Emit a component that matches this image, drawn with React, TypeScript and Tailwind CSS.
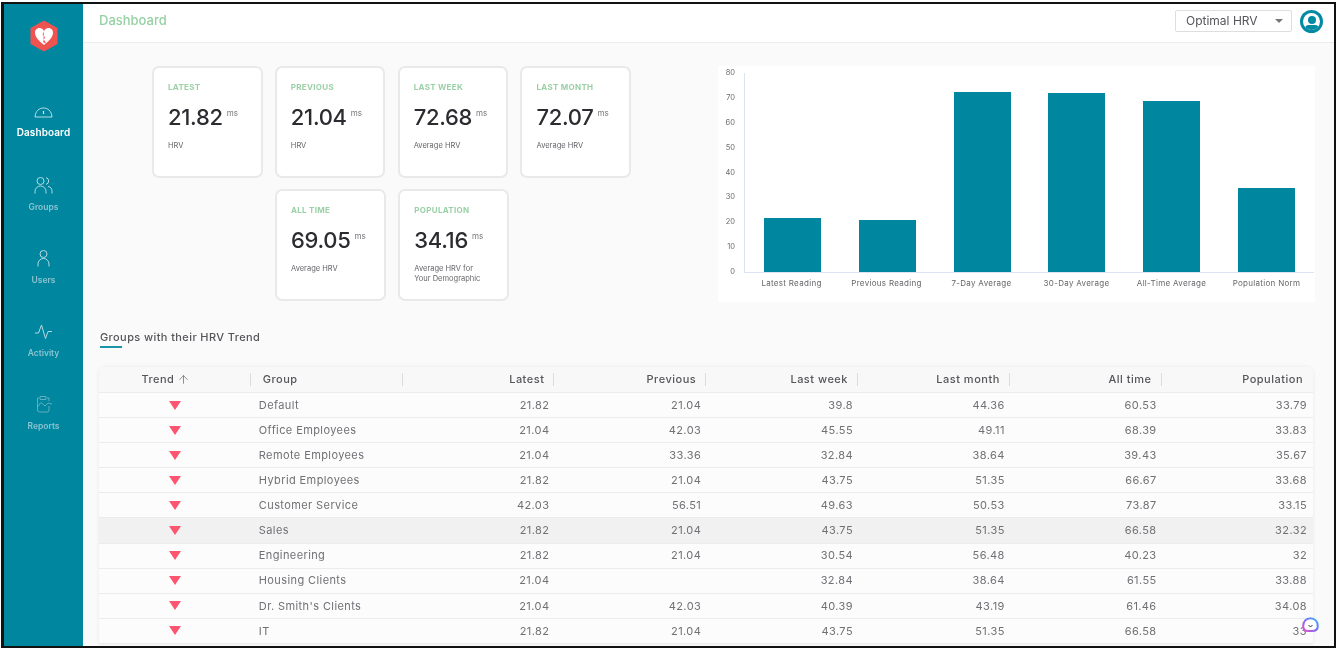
import { ArrowUp } from "lucide-react";

const font = { fontFamily: "Inter, 'Liberation Sans', sans-serif" };

const cardsTop = [
  { t: "LATEST", v: "21.82", s: ["HRV"] },
  { t: "PREVIOUS", v: "21.04", s: ["HRV"] },
  { t: "LAST WEEK", v: "72.68", s: ["Average HRV"] },
  { t: "LAST MONTH", v: "72.07", s: ["Average HRV"] },
];
const cardsBottom = [
  { t: "ALL TIME", v: "69.05", s: ["Average HRV"] },
  { t: "POPULATION", v: "34.16", s: ["Average HRV for", "Your Demographic"] },
];

const rows = [
  ["Default", "21.82", "21.04", "39.8", "44.36", "60.53", "33.79"],
  ["Office Employees", "21.04", "42.03", "45.55", "49.11", "68.39", "33.83"],
  ["Remote Employees", "21.04", "33.36", "32.84", "38.64", "39.43", "35.67"],
  ["Hybrid Employees", "21.82", "21.04", "43.75", "51.35", "66.67", "33.68"],
  ["Customer Service", "42.03", "56.51", "49.63", "50.53", "73.87", "33.15"],
  ["Sales", "21.82", "21.04", "43.75", "51.35", "66.58", "32.32"],
  ["Engineering", "21.82", "21.04", "30.54", "56.48", "40.23", "32"],
  ["Housing Clients", "21.04", "", "32.84", "38.64", "61.55", "33.88"],
  ["Dr. Smith's Clients", "21.04", "42.03", "40.39", "43.19", "61.46", "34.08"],
  ["IT", "21.82", "21.04", "43.75", "51.35", "66.58", "33"],
];

const bars = [
  { l: "Latest Reading", v: 21.82 },
  { l: "Previous Reading", v: 21.04 },
  { l: "7-Day Average", v: 72.68 },
  { l: "30-Day Average", v: 72.07 },
  { l: "All-Time Average", v: 69.05 },
  { l: "Population Norm", v: 34 },
];

function Card({ t, v, s }: { t: string; v: string; s: string[] }) {
  return (
    <div className="w-[111px] h-[112px] bg-white rounded-[7px] border-2 border-[#e9e9e9] pl-[14px] pt-[14px]">
      <div className="text-[8px] leading-[10px] font-bold tracking-[0.3px] text-[#9ad0a6]">{t}</div>
      <div className="flex mt-[11px] h-[28px]">
        <span className="text-[22px] leading-[28px] font-medium tracking-[-0.3px] text-[#2c2c30]">{v}</span>
        <span className="text-[8px] leading-[10px] ml-[4px] mt-[5px] text-[#77777c]">ms</span>
      </div>
      <div className="mt-[10px] text-[7.5px] leading-[10px] text-[#66666b]">
        {s.map((x) => (
          <div key={x}>{x}</div>
        ))}
      </div>
    </div>
  );
}

function NavItem({ icon, label, active }: { icon: React.ReactNode; label: string; active?: boolean }) {
  return (
    <div className="h-[73px] flex flex-col items-center">
      <div className="h-[24px] flex items-center justify-center">{icon}</div>
      <div className={`leading-[12px] font-semibold ${active ? "text-white text-[10px] tracking-[0.1px] mt-[2px]" : "mt-[4px] text-[8.5px] text-[#8cc4d0]"}`}>{label}</div>
    </div>
  );
}

function Logo() {
  return (
    <svg width="28" height="32" viewBox="0 0 28 32">
      <path d="M14 0.5 L27.5 8 V24 L14 31.5 L0.5 24 V8 Z" fill="#ef5350" />
      <path d="M14 25 C9 21 5 17 5 12.5 C5 9.5 7.5 8 9.5 8 C11.5 8 13 9 14 11 C15 9 16.5 8 18.5 8 C20.5 8 23 9.5 23 12.5 C23 17 19 21 14 25 Z" fill="#ffffff" />
      <path d="M14 11 L12.5 15 L15 17 L13 22 L16.5 24 L13.5 19" fill="#ef5350" />
    </svg>
  );
}

function Gauge() {
  return (
    <svg width="19" height="11" viewBox="0 0 19 11" fill="none" stroke="#e2f2f5" strokeWidth="0.8">
      <path d="M1 10 C1.5 4 5 1 9.5 1 C14 1 17.5 4 18 10 Z" />
      <path d="M9.5 4 V7" strokeWidth="1.2" />
    </svg>
  );
}

function GroupsIcon() {
  return (
    <svg width="19" height="19" viewBox="0 0 19 19" fill="none" stroke="#b4dae2" strokeWidth="1">
      <circle cx="6.5" cy="5" r="3.5" />
      <path d="M12 1.6 A3.5 3.5 0 0 1 12 8.4" />
      <path d="M1 17.5 V15.5 A5.5 5.5 0 0 1 12 15.5 V17.5" />
      <path d="M14 10.4 A5 5 0 0 1 18 15.5 V17.5" />
    </svg>
  );
}

function UserIcon() {
  return (
    <svg width="19" height="19" viewBox="0 0 19 19" fill="none" stroke="#b4dae2" strokeWidth="1">
      <circle cx="9.5" cy="5" r="3.5" />
      <path d="M4 17.5 V15 A5.5 5.5 0 0 1 15 15 V17.5" />
    </svg>
  );
}

function ActivityIcon() {
  return (
    <svg width="19" height="19" viewBox="0 0 19 19" fill="none" stroke="#b4dae2" strokeWidth="1">
      <path d="M1 11 H4.5 L7.5 3 L11.5 16.5 L14 9.5 H18" />
    </svg>
  );
}

function Reports() {
  return (
    <svg width="18" height="18" viewBox="0 0 18 18" fill="none" stroke="#6db3c4" strokeWidth="0.9">
      <path d="M4 3 H2.5 V15 Q2.5 17 4.5 17 H12 Q14 17 14 15 V11" />
      <path d="M12 3 H14 V6" />
      <path d="M5 1.5 H11 V4.5 H5 Z" />
      <path d="M2.5 12 L6 7.5 L10 11 L13 8 L17 9" />
    </svg>
  );
}

function Chart() {
  const plot = 198.5;
  const ticks = [80, 70, 60, 50, 40, 30, 20, 10, 0];
  return (
    <div className="w-[597px] h-[236px] bg-white relative">
      <div className="absolute left-0 top-[2px] w-[17px] flex flex-col items-end text-[7.5px] leading-[10px] text-[#6c6c70] gap-[14.9px]">
        {ticks.map((t) => (
          <div key={t}>{t}</div>
        ))}
      </div>
      <div className="absolute left-[26px] top-[7px] w-[570px] h-[200px] border-l border-b border-[#dbe4f5] flex">
        {bars.map((b) => (
          <div key={b.l} className="flex-1 flex items-end justify-center">
            <div className="w-[57px] bg-[#00869f]" style={{ height: (b.v / 80) * plot + "px" }} />
          </div>
        ))}
      </div>
      <div className="absolute left-[26px] top-[211px] w-[570px] flex text-[8px] leading-[12px] text-[#66666a] tracking-[0.3px]">
        {bars.map((b) => (
          <div key={b.l} className="flex-1 text-center">{b.l}</div>
        ))}
      </div>
    </div>
  );
}

function Bubble() {
  return (
    <div className="absolute left-[1302px] top-[617px]">
      <svg width="17" height="16" viewBox="0 0 17 16">
        <defs>
          <linearGradient id="bubble" x1="0" y1="1" x2="1" y2="0">
            <stop offset="0" stopColor="#e84fd0" />
            <stop offset="0.5" stopColor="#7a6cf2" />
            <stop offset="1" stopColor="#3fb8f5" />
          </linearGradient>
        </defs>
        <path d="M8.5 1.2 C12.8 1.2 15.8 4.5 15.8 9 C15.8 12.5 13 14 10 14 H6 C3.5 14 1.2 12.5 1.2 9 C1.2 4.5 4.2 1.2 8.5 1.2 Z" fill="#ffffff" stroke="url(#bubble)" strokeWidth="2" />
        <path d="M6.5 8.5 Q8.5 10.5 10.5 8.5" fill="none" stroke="#333" strokeWidth="1" />
      </svg>
    </div>
  );
}

const colW = "w-[151.8px]";

export default function App() {
  return (
    <div className="relative w-[1341px] h-[653px] bg-white overflow-hidden blur-[0.3px]" style={font}>
      <div className="ml-[1px] mt-[2px] w-[1335px] h-[646px] border-2 border-l-[3px] border-[#111] flex overflow-hidden bg-[#fafafa]">
        <aside className="w-[79px] shrink-0 bg-[#00869f] flex flex-col items-center">
          <div className="mt-[16px] h-[32px]"><Logo /></div>
          <div className="mt-[48px] w-full">
            <NavItem active label="Dashboard" icon={<Gauge />} />
            <NavItem label="Groups" icon={<GroupsIcon />} />
            <NavItem label="Users" icon={<UserIcon />} />
            <NavItem label="Activity" icon={<ActivityIcon />} />
            <NavItem label="Reports" icon={<Reports />} />
          </div>
        </aside>
        <main className="flex-1 min-w-0 flex flex-col">
          <header className="h-[39px] shrink-0 bg-white border-b border-[#ececec] flex items-center pl-[16px] pr-[11px] pb-[4px]">
            <div className="text-[13px] font-medium text-[#96d0a4]">Dashboard</div>
            <div className="ml-auto w-[117px] h-[22px] bg-white rounded-[2px] border border-[#dedede] flex items-center pl-[10px] pr-[8px] text-[12px] text-[#55555a]">
              <span>Optimal HRV</span>
              <span className="ml-auto w-0 h-0 border-x-[4px] border-x-transparent border-t-[4px] border-t-[#77777a]" />
            </div>
            <div className="ml-[8px] w-[23px] h-[23px] rounded-full bg-[#008ba3] p-[3px]">
              <div className="w-full h-full rounded-full bg-white relative overflow-hidden flex justify-center">
                <div className="w-[8px] h-[8px] mt-[3px] rounded-full bg-[#008ba3]" />
                <div className="absolute w-[14px] h-[8px] top-[12px] rounded-full bg-[#008ba3]" />
              </div>
            </div>
          </header>
          <section className="flex pt-[23px] pl-[69px] h-[287px] shrink-0">
            <div className="w-[479px] flex flex-col gap-[11px] shrink-0">
              <div className="flex gap-[12.3px]">
                {cardsTop.map((c) => <Card key={c.t} {...c} />)}
              </div>
              <div className="flex gap-[12.3px] pl-[123px]">
                {cardsBottom.map((c) => <Card key={c.t} {...c} />)}
              </div>
            </div>
            <div className="ml-[87px]"><Chart /></div>
          </section>
          <section className="pl-[16px] pr-[21px]">
            <div className="pl-[1px] text-[11px] leading-[14px] font-medium text-[#55555a] tracking-[0.4px]">Groups with their HRV Trend</div>
            <div className="ml-[1px] w-[22px] h-[2px] mt-[2px] bg-[#1c94a8]" />
            <div className="mt-[19px] bg-white rounded-t-[6px] shadow-[0_0_4px_rgba(0,0,0,0.07)]">
              <div className="h-[26px] flex items-center bg-[#f8f8f8] rounded-t-[6px] border-b border-[#ececec] text-[11px] tracking-[0.5px] font-medium text-[#55555a]">
                <div className={`${colW} pr-[17px] border-r border-[#dcdcdc] h-[13px] flex items-center justify-center gap-[3px] leading-none`}>Trend <ArrowUp size={13} strokeWidth={1.2} /></div>
                <div className={`${colW} pl-[12px] border-r border-[#dcdcdc] h-[13px] flex items-center leading-none`}>Group</div>
                {["Latest", "Previous", "Last week", "Last month", "All time"].map((h) => (
                  <div key={h} className={`${colW} pr-[9px] border-r border-[#dcdcdc] h-[13px] flex items-center justify-end leading-none`}>{h}</div>
                ))}
                <div className="flex-1 pr-[10px] h-[13px] flex items-center justify-end leading-none">Population</div>
              </div>
              {rows.map((r) => (
                <div key={r[0]} className={`h-[25.1px] flex items-center border-b border-[#ececec] text-[11px] tracking-[0.4px] text-[#707075] ${r[0] === "Sales" ? "bg-[#f1f1f1]" : "bg-[#fcfcfc]"}`}>
                  <div className={`${colW} flex justify-center`}>
                    <span className="w-0 h-0 border-x-[6px] border-x-transparent border-t-[9px] border-t-[#fb5570]" />
                  </div>
                  <div className={`${colW} pl-[8px] truncate`}>{r[0]}</div>
                  {r.slice(1, 6).map((v, i) => (
                    <div key={i} className={`${colW} pr-[5px] text-right`}>{v}</div>
                  ))}
                  <div className="flex-1 pr-[6px] text-right">{r[6]}</div>
                </div>
              ))}
            </div>
          </section>
        </main>
      </div>
      <Bubble />
    </div>
  );
}
